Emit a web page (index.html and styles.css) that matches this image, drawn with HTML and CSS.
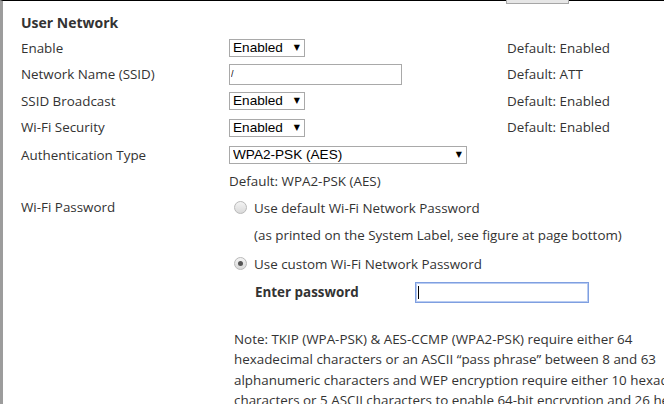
FILE: index.html
```html
<!DOCTYPE html>
<html>
<head>
<meta charset="utf-8">
<link rel="stylesheet" href="styles.css">
</head>
<body>
<div class="frame">
  <div class="top-button"></div>
  <h2 class="section-title">User Network</h2>
  <div class="form">
    <div class="label">Enable</div>
    <div class="control"><span class="select-wrap"><select class="select small"><option>Enabled</option></select></span></div>
    <div class="default">Default: Enabled</div>

    <div class="label">Network Name (SSID)</div>
    <div class="control"><input class="text ssid" type="text" value="/"></div>
    <div class="default">Default: ATT</div>

    <div class="label">SSID Broadcast</div>
    <div class="control"><span class="select-wrap"><select class="select small"><option>Enabled</option></select></span></div>
    <div class="default">Default: Enabled</div>

    <div class="label">Wi-Fi Security</div>
    <div class="control"><span class="select-wrap"><select class="select small"><option>Enabled</option></select></span></div>
    <div class="default">Default: Enabled</div>

    <div class="label">Authentication Type</div>
    <div class="control wide"><span class="select-wrap"><select class="select large"><option>WPA2-PSK (AES)</option></select></span></div>

    <div class="label"></div>
    <div class="control wide"><span class="plain">Default: WPA2-PSK (AES)</span></div>
  </div>

  <div class="password">
    <div class="label pw-label">Wi-Fi Password</div>
    <div class="pw-body">
      <div class="radio-line"><span class="radio"></span><span>Use default Wi-Fi Network Password</span></div>
      <div class="radio-line indent">(as printed on the System Label, see figure at page bottom)</div>
      <div class="radio-line custom"><span class="radio checked"></span><span>Use custom Wi-Fi Network Password</span></div>
      <div class="enter-row">
        <span class="enter-label">Enter password</span>
        <span class="pw-wrap"><input class="text pw" type="password"><span class="caret"></span></span>
      </div>
      <p class="note">Note: TKIP (WPA-PSK) &amp; AES-CCMP (WPA2-PSK) require either 64<br>hexadecimal characters or an ASCII “pass phrase” between 8 and 63<br>alphanumeric characters and WEP encryption require either 10 hexadecimal<br>characters or 5 ASCII characters to enable 64-bit encryption and 26 hexadecimal</p>
    </div>
  </div>
</div>
</body>
</html>
```
FILE: styles.css
```css
html, body {
  margin: 0;
  padding: 0;
  background: #fff;
  overflow: hidden;
}
body {
  font-family: "Open Sans", "DejaVu Sans", sans-serif;
  font-size: 13.4px;
  color: #333;
}
.frame {
  position: relative;
  border-top: 1px solid #000;
  border-left: 3px solid #9c9c9c;
  height: 404px;
  padding-left: 18px;
  box-sizing: border-box;
}
.top-button {
  position: absolute;
  left: 503px;
  top: -1px;
  width: 61px;
  height: 3px;
  background: #e6e6e6;
  border: 1px solid #a6a6a6;
  border-top: none;
}
.section-title {
  margin: 12px 0 0;
  font-size: 14px;
  font-weight: bold;
  line-height: 20px;
  color: #333;
}
.form {
  margin-top: 1px;
  display: grid;
  grid-template-columns: 208px 278px auto;
  grid-template-rows: 27px 26.5px 26.5px 26.5px 28.5px 24px;
  align-items: center;
}
.label, .default, .plain {
  line-height: 18px;
  white-space: nowrap;
}
.control.wide {
  grid-column: 2 / 4;
}
.select-wrap {
  position: relative;
  display: inline-block;
  vertical-align: middle;
}
.select-wrap::after {
  content: "▼";
  position: absolute;
  right: 5px;
  top: 4px;
  font-family: "DejaVu Sans", sans-serif;
  font-size: 8px;
  color: #000;
  pointer-events: none;
}
.select {
  -webkit-appearance: none;
  appearance: none;
  display: block;
  font-family: "Liberation Sans", Arial, sans-serif;
  font-size: 13.6px;
  color: #000;
  background: #fff;
  border: 1px solid #a9a9a9;
  border-radius: 0;
  height: 18px;
  padding: 0 0 0 3px;
  margin: 0;
  line-height: 16px;
}
.select.small { width: 76px; }
.select.large { width: 238px; }
.text {
  display: block;
  box-sizing: border-box;
  border: 1px solid #a9a9a9;
  background: #fff;
  margin: 0;
  outline: none;
  font-family: "Liberation Sans", Arial, sans-serif;
}
.ssid {
  width: 173px;
  height: 21px;
  padding: 0 1px;
  font-size: 9px;
  color: #000;
}
.password {
  display: grid;
  grid-template-columns: 208px auto;
  margin-top: 1px;
}
.pw-label {
  padding-top: 4px;
}
.pw-body {
  padding-left: 5px;
}
.radio-line {
  display: flex;
  align-items: center;
  height: 27px;
  white-space: nowrap;
}
.radio-line.indent {
  padding-left: 20px;
}
.radio-line.custom {
  margin-top: 2px;
}
.radio {
  box-sizing: border-box;
  width: 13px;
  height: 13px;
  border-radius: 50%;
  border: 1px solid #b9b9b9;
  background: linear-gradient(#f4f4f4, #d9d9d9);
  margin-right: 7px;
  flex: none;
  display: flex;
  align-items: center;
  justify-content: center;
}
.radio.checked::after {
  content: "";
  width: 5px;
  height: 5px;
  border-radius: 50%;
  background: #555;
}
.enter-row {
  display: flex;
  align-items: center;
  height: 28px;
  margin-top: 1px;
}
.enter-label {
  font-weight: bold;
  padding-left: 21px;
  width: 160px;
  white-space: nowrap;
}
.pw-wrap {
  position: relative;
  display: inline-block;
}
.pw {
  width: 174px;
  height: 21px;
  border: 1px solid #7f9fe0;
  box-shadow: 0 0 0 1px #b9ccf2 inset;
}
.caret {
  position: absolute;
  left: 3px;
  top: 4px;
  width: 1px;
  height: 13px;
  background: #000;
}
.note {
  margin: 23px 0 0;
  line-height: 20.4px;
  white-space: nowrap;
}
```
